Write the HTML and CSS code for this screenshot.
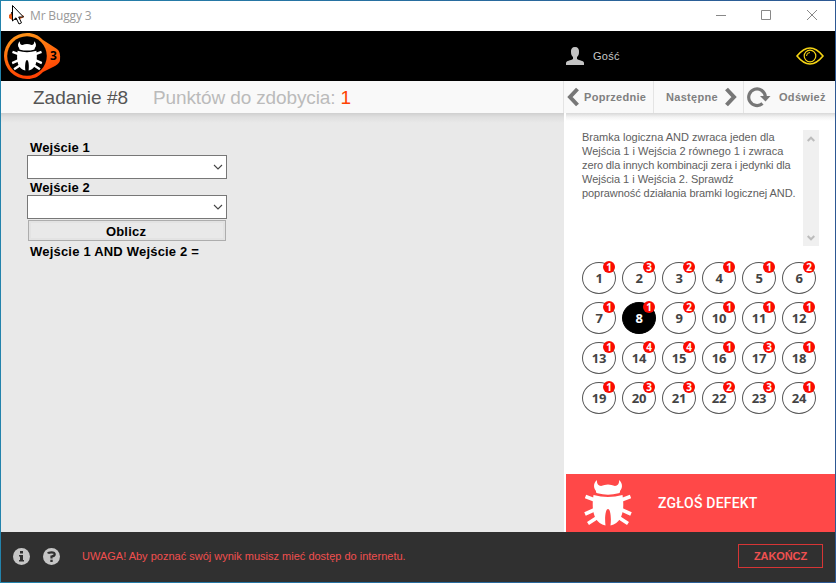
FILE: index.html
```html
<!DOCTYPE html>
<html lang="pl">
<head>
<meta charset="utf-8">
<title>Mr Buggy 3</title>
<link rel="stylesheet" href="styles.css">
</head>
<body>
<svg width="0" height="0" class="defs">
  <symbol id="bug" viewBox="0 0 48 46">
    <path fill="currentColor" d="M13 0C9.500 3 9 7.500 12 11C12 12.500 12 13 13.500 13.300Q24 16 34.500 13.300C36 13 36 12.500 36 11C39 7.500 38.500 3 35 0C35.500 3.500 34 5.500 31 6Q24 3 17 6C14 5.500 12.500 3.500 13 0ZM9.500 15Q24 19 38.500 15C39.500 22 42 42 26.500 45.500C27.500 38 26.500 29 24 29C21.500 29 20.500 38 21.500 45.500C6 42 8.500 22 9.500 15Z"/>
    <path fill="none" stroke="currentColor" stroke-width="3.600" d="M1.500 16.500L12 20.500M46.500 16.500L36 20.500M1 34L12 29M47 34L36 29M4 43.500L14 37M44 43.500L34 37"/>
  </symbol>
</svg>
<div class="window">
  <header class="titlebar">
    <svg class="appicon" width="18" height="24" viewBox="0 0 18 24"><path fill="#e85a16" d="M5 8L0 12L0 15L3 17L9 17L15 14V13Z"/><path fill="#111" d="M2 9H8V17H4Z"/><path fill="#fff" stroke="#000" d="M3.500 2.500V18L7 14.800L10 21L12.500 19.800L9.700 14H14.500Z"/></svg>
    <span class="caption">Mr Buggy 3</span>
    <svg class="controls" width="103" height="12" viewBox="0 0 103 12"><path fill="none" stroke="#888" d="M0 6.500H10M45.500 1.500H54.500V10.500H45.500ZM91 1L101 11M101 1L91 11"/></svg>
  </header>
  <div class="brandbar">
    <div class="logo">
      <svg width="58" height="48" viewBox="0 0 58 48"><defs><linearGradient id="flame" x1="0" y1="0" x2=".3" y2="1"><stop offset="0" stop-color="#ff9c1a"/><stop offset="1" stop-color="#ff4203"/></linearGradient></defs><path fill="url(#flame)" d="M23 1C30 1 34 3 39 8L53 17Q57 20 56 28Q56 31 51 34L39 40C34 45 30 47 23 47A23 23 0 0 1 23 1Z"/><circle cx="23" cy="24" r="19.800"/><use href="#bug" x="7.500" y="9" width="31" height="30" color="#fff"/></svg>
      <b>3</b>
    </div>
    <div class="user"><svg width="18" height="18" viewBox="0 0 18 18"><path fill="#c4c4c4" d="M9 0C12 0 13.300 2 13 5C13 8 12 9 11 10V12C13 13.500 18 13.500 18 16V18H0V16C0 13.500 5 13.500 7 12V10C6 9 5 8 5 5C4.700 2 6 0 9 0Z"/></svg><span>Gość</span></div>
    <svg class="eye" width="28" height="18" viewBox="0 0 28 18"><g fill="none" stroke="#f5d414" stroke-width="1.600"><path d="M1 9Q14-7 27 9Q14 25 1 9Z"/><circle cx="14" cy="9" r="5.800" stroke-width="1.200"/><path stroke-width="1" d="M10.500 9Q10.500 5.500 14 5.500"/></g></svg>
  </div>
  <div class="toolbar">
    <div class="heading"><h1>Zadanie #8</h1><p>Punktów do zdobycia: <em>1</em></p></div>
    <nav>
      <a class="prev"><svg width="12" height="20" viewBox="0 0 12 20"><path d="M10.500 2L3 10L10.500 18"/></svg><span>Poprzednie</span></a>
      <a class="next"><span>Następne</span><svg width="12" height="20" viewBox="0 0 12 20"><path d="M1.500 2L9 10L1.500 18"/></svg></a>
      <a class="reload"><svg width="24" height="21" viewBox="0 0 24 21"><path class="arc" d="M15.500 16.500A8.300 8.300 0 1 1 18.300 9.500"/><path class="tip" d="M13 9H23.500L18.500 14.500Z"/></svg><span>Odśwież</span></a>
    </nav>
  </div>
  <main>
    <section class="work">
      <form>
        <label>Wejście 1</label>
        <div class="combo"><svg width="10" height="6" viewBox="0 0 10 6"><path d="M1 1L5 5L9 1"/></svg></div>
        <label>Wejście 2</label>
        <div class="combo"><svg width="10" height="6" viewBox="0 0 10 6"><path d="M1 1L5 5L9 1"/></svg></div>
        <button type="button">Oblicz</button>
        <output>Wejście 1 AND Wejście 2 =</output>
      </form>
    </section>
    <aside>
      <div class="description">
        <p>Bramka logiczna AND zwraca jeden dla<br>Wejścia 1 i Wejścia 2 równego 1 i zwraca<br><span class="tight">zero dla innych kombinacji zera i jedynki dla</span><br><span class="loose">Wejścia 1 i Wejścia 2. Sprawdź</span><br><span class="snug">poprawność działania bramki logicznej AND.</span></p>
        <div class="scroll"><svg width="8" height="6" viewBox="0 0 8 6"><path d="M.7 5L4 1.700L7.300 5"/></svg><svg width="8" height="6" viewBox="0 0 8 6"><path d="M.7 1L4 4.300L7.300 1"/></svg></div>
      </div>
      <div class="tasks">
        <a>1<i>1</i></a><a>2<i>3</i></a><a>3<i>2</i></a><a>4<i>1</i></a><a>5<i>1</i></a><a>6<i>2</i></a>
        <a>7<i>1</i></a><a class="active">8<i>1</i></a><a>9<i>2</i></a><a>10<i>1</i></a><a>11<i>1</i></a><a>12<i>1</i></a>
        <a>13<i>1</i></a><a>14<i>4</i></a><a>15<i>4</i></a><a>16<i>1</i></a><a>17<i>3</i></a><a>18<i>1</i></a>
        <a>19<i>1</i></a><a>20<i>3</i></a><a>21<i>3</i></a><a>22<i>2</i></a><a>23<i>3</i></a><a>24<i>1</i></a>
      </div>
      <div class="report"><svg width="48" height="46"><use href="#bug"/></svg><span>ZGŁOŚ DEFEKT</span></div>
    </aside>
  </main>
  <footer>
    <svg width="17" height="17" viewBox="0 0 17 17"><circle cx="8.500" cy="8.500" r="8.500" fill="#c6c6c6"/><path fill="#303030" d="M7 3H10V5.500H7ZM6 7H10V12H11V13.500H6V12H7V8.500H6Z"/></svg>
    <svg width="17" height="17" viewBox="0 0 17 17"><circle cx="8.500" cy="8.500" r="8.500" fill="#c6c6c6"/><path fill="none" stroke="#303030" stroke-width="2.200" d="M5 5.500Q5.500 4.300 8.500 4.300Q12 4.300 11.700 6.500Q11.500 8 8.500 8.500V10.500"/><path fill="#303030" d="M7.300 11.700H9.700V14H7.300Z"/></svg>
    <span class="warning">UWAGA! Aby poznać swój wynik musisz mieć dostęp do internetu.</span>
    <a class="finish">ZAKOŃCZ</a>
  </footer>
</div>
</body>
</html>
```

FILE: styles.css
```css
* { box-sizing: border-box; }
body { margin: 0; width: 836px; height: 583px; padding: 1px; overflow: hidden; background: linear-gradient(90deg, #2383ac, #2d5893); font-family: "Liberation Sans", Arial, sans-serif; }
.defs { position: absolute; }
svg { display: block; flex: none; }
.window { width: 834px; height: 581px; display: flex; flex-direction: column; background: #fff; white-space: nowrap; }
.titlebar { height: 30px; display: flex; align-items: center; padding: 0 0 2px 8px; }
.appicon { margin-right: 3px; }
.caption { font: 12px/16px "Open Sans", sans-serif; padding-top: 1px; letter-spacing: -.15px; color: #999; }
.controls { margin: 0 16px 0 auto; }
.brandbar { height: 50px; background: #000; display: flex; align-items: center; }
.logo { position: relative; margin-left: 3px; }
.logo b { position: absolute; left: 46px; top: 17px; font: bold 12px/14px "Open Sans", sans-serif; color: #000; }
.user { display: flex; align-items: center; gap: 9px; margin-left: 504px; color: #c8c8c8; font-size: 11px; letter-spacing: .3px; }
.eye { margin: 0 11px 0 auto; }
.toolbar { height: 32px; background: #f9f9f9; display: flex; }
.heading { width: 562px; display: flex; align-items: center; padding: 1px 0 0 32px; gap: 25px; }
h1, .heading p { margin: 0; font-size: 19px; line-height: 22px; font-weight: normal; }
h1 { color: #555; }
.heading p { color: #bbb; letter-spacing: -.13px; }
em { font-style: normal; color: #ff4203; }
nav { display: flex; color: #808080; font-weight: bold; font-size: 11px; letter-spacing: .3px; }
nav a { display: flex; align-items: center; height: 32px; border-left: 1px solid #e4e4e4; }
nav path { fill: none; stroke: #777; stroke-width: 4; }
nav .arc { stroke-width: 3.2; }
nav .tip { fill: #777; stroke: none; }
.prev { width: 90px; padding-left: 3px; gap: 5px; }
.next { width: 90px; padding-left: 12px; gap: 7px; }
.reload { width: 92px; padding-left: 3px; gap: 8px; }
main { height: 419px; display: flex; }
.work { width: 563px; background: linear-gradient(#cfcfcf, #dfdfdf 4px, #e9e9e9 10px); padding: 26px; }
form { display: flex; flex-direction: column; width: 200px; font-weight: bold; font-size: 13px; letter-spacing: .1px; }
label { height: 16px; line-height: 18px; padding-left: 3px; }
.combo { height: 24px; border: 1px solid #777; background: #fff; display: flex; align-items: center; justify-content: flex-end; padding-right: 3px; }
.combo path { fill: none; stroke: #444; stroke-width: 1.1; }
button { margin: 1px 1px 0; height: 21px; padding: 1px 2px 0 0; border: 1px solid #adadad; background: #e9e9e9; box-shadow: inset 0 0 0 2px #e3e3e3; font: bold 13px "Liberation Sans", sans-serif; letter-spacing: .2px; }
output { padding-left: 3px; height: 20px; line-height: 22px; letter-spacing: .2px; }
aside { width: 271px; border-left: 2px solid #fff; background: linear-gradient(#d8d8d8, #f3f3f3 4px, #fff 8px); display: flex; flex-direction: column; }
.description { display: flex; justify-content: space-between; margin: 17px 16px 0; height: 116px; }
.description p { margin: 0; font-size: 11px; line-height: 14px; color: #606060; }
.tight { letter-spacing: -.12px; }
.loose { letter-spacing: -.03px; }
.snug { letter-spacing: -.07px; }
.scroll { width: 16px; background: #f0f0f0; display: flex; flex-direction: column; justify-content: space-between; align-items: center; padding: 6px 0 5px; }
.scroll path { fill: none; stroke: #bcbcbc; stroke-width: 2; }
.tasks { display: grid; grid-template-columns: repeat(6, 40px); grid-auto-rows: 40px; margin: 16px 0 0 16px; }
.tasks a { position: relative; width: 34px; height: 32px; border: 1px solid #555; border-radius: 50%; font: bold 13px/30px "Open Sans", sans-serif; letter-spacing: -.3px; text-align: center; color: #444; }
.tasks .active { background: #000; border-color: #000; color: #fff; }
.tasks i { position: absolute; right: 0; top: -2px; width: 12px; height: 12px; border-radius: 50%; background: #fb0b00; color: #fff; font: bold 10px/12px "Open Sans", sans-serif; letter-spacing: 0; }
.report { margin-top: auto; height: 58px; background: #ff4848; color: #fff; display: flex; align-items: center; padding-left: 18px; gap: 26px; font: 500 14px Roboto, sans-serif; letter-spacing: .2px; }
footer { height: 50px; background: #303030; display: flex; align-items: center; padding: 0 12px 2px; }
footer svg + svg { margin-left: 13px; }
.warning { margin-left: 22px; font-size: 11px; color: #f04f4f; }
.finish { margin-left: auto; width: 85px; height: 24px; border: 1px solid #d53535; color: #f05050; font-size: 11px; font-weight: bold; line-height: 22px; text-align: center; letter-spacing: -.1px; }
```
